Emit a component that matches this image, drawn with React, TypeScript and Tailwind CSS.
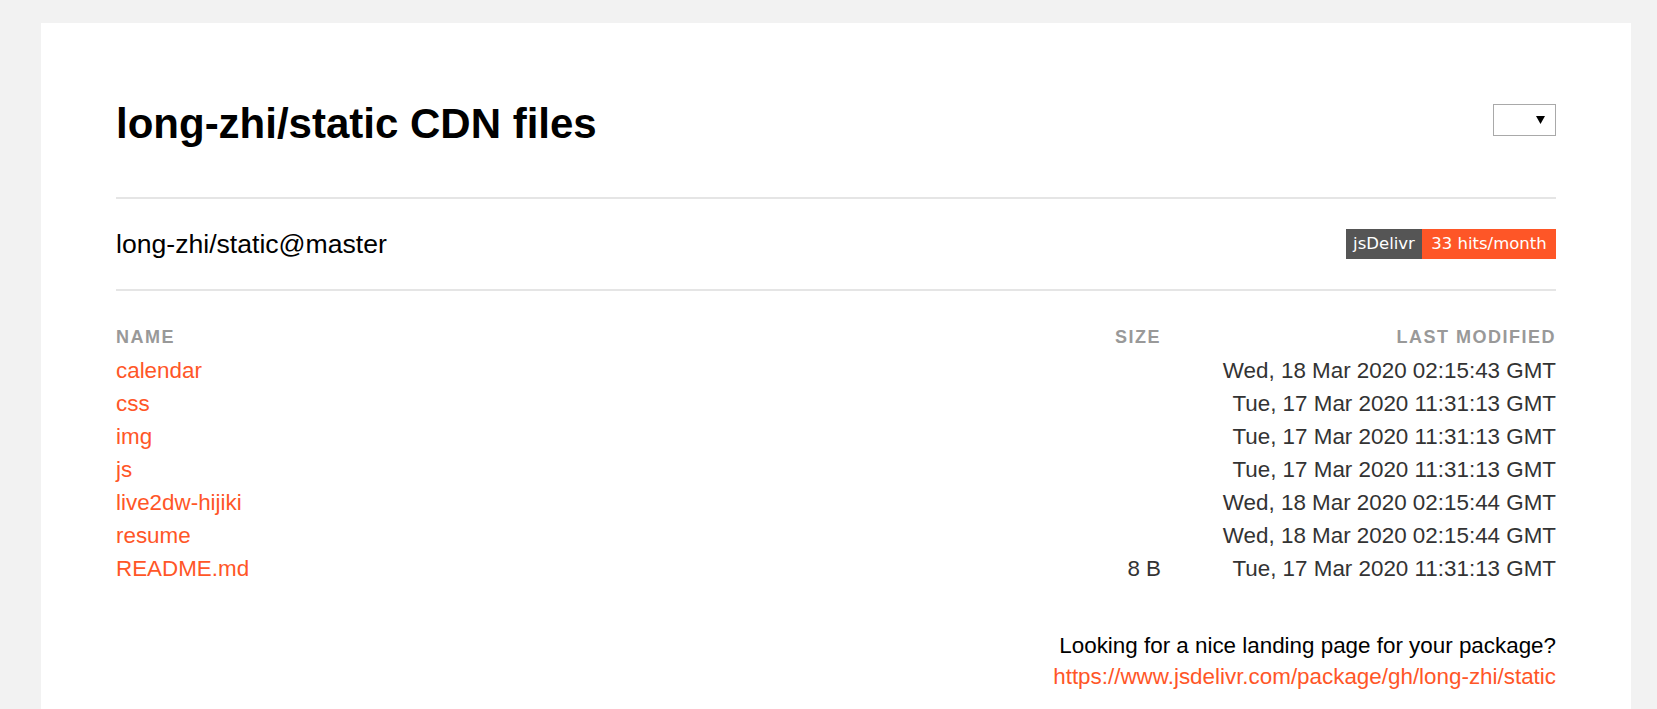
import React from 'react';

const files = [
  { name: 'calendar', size: '', modified: 'Wed, 18 Mar 2020 02:15:43 GMT' },
  { name: 'css', size: '', modified: 'Tue, 17 Mar 2020 11:31:13 GMT' },
  { name: 'img', size: '', modified: 'Tue, 17 Mar 2020 11:31:13 GMT' },
  { name: 'js', size: '', modified: 'Tue, 17 Mar 2020 11:31:13 GMT' },
  { name: 'live2dw-hijiki', size: '', modified: 'Wed, 18 Mar 2020 02:15:44 GMT' },
  { name: 'resume', size: '', modified: 'Wed, 18 Mar 2020 02:15:44 GMT' },
  { name: 'README.md', size: '8 B', modified: 'Tue, 17 Mar 2020 11:31:13 GMT' },
];

const App = () => {
  return (
    <div className="min-h-screen bg-[#f2f2f2] pl-[41px] pt-[23px] font-['Liberation_Sans',Arial,sans-serif]">
      <div className="w-[1590px] bg-white px-[75px] pt-[77px] pb-[60px]">
        {/* Title + version select */}
        <div className="flex items-start justify-between">
          <h1 className="text-[42px] font-bold leading-[48px] text-black">long-zhi/static CDN files</h1>
          <div className="mt-[4px] flex h-[32px] w-[63px] items-center justify-end border border-[#a9a9a9] bg-white pr-[10px]">
            <svg width="9" height="8" viewBox="0 0 9 8">
              <polygon points="0,0 9,0 4.5,8" fill="#000" />
            </svg>
          </div>
        </div>

        <div className="mt-[49px] h-[2px] bg-[#e5e5e5]" />

        {/* Package + badge */}
        <div className="flex h-[90px] items-center justify-between">
          <span className="text-[26.6px] leading-[30px] text-black">long-zhi/static@master</span>
          <div className="flex h-[30px] font-['DejaVu_Sans',Verdana,sans-serif] text-[16.5px] text-white">
            <span className="flex w-[76px] items-center justify-center bg-[#555555]">jsDelivr</span>
            <span className="flex w-[134px] items-center justify-center bg-[#fe5627]">33 hits/month</span>
          </div>
        </div>

        <div className="h-[2px] bg-[#e5e5e5]" />

        {/* File table */}
        <div className="mt-[34px] flex text-[18px] font-bold uppercase leading-[24px] tracking-[1.5px] text-[#999999]">
          <div className="flex-1">Name</div>
          <div className="w-[100px] text-right">Size</div>
          <div className="w-[395px] text-right">Last modified</div>
        </div>
        <div className="mt-[5px]">
          {files.map((f) => (
            <div key={f.name} className="flex text-[22.4px] leading-[33px]">
              <a className="flex-1 text-[#ff5627]">{f.name}</a>
              <div className="w-[100px] text-right text-[#333333]">{f.size}</div>
              <div className="w-[395px] text-right text-[#333333]">{f.modified}</div>
            </div>
          ))}
        </div>

        {/* Landing page hint */}
        <div className="mt-[45px] text-right text-[22.4px] leading-[31px]">
          <div className="text-black">Looking for a nice landing page for your package?</div>
          <a className="text-[#ff5627]">https://www.jsdelivr.com/package/gh/long-zhi/static</a>
        </div>
      </div>
    </div>
  );
};

export default App;
